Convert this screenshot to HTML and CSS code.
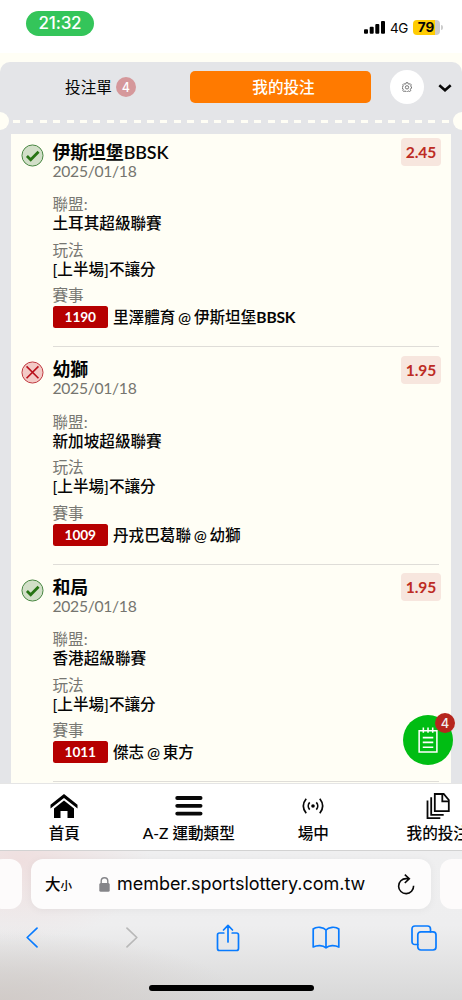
FILE: index.html
```
<!DOCTYPE html>
<html lang="zh-Hant">
<head>
<meta charset="utf-8">
<title>我的投注</title>
<link rel="stylesheet" href="styles.css">
</head>
<body>
<div class="screen">
  <header class="status">
    <span class="clock">21:32</span>
    <div class="signals">
      <svg class="bars" viewBox="0 0 21 13"><rect x="0" y="8.2" width="4" height="4.6" rx="1"/><rect x="5.7" y="5.8" width="4" height="7" rx="1"/><rect x="11.3" y="3" width="4" height="9.8" rx="1"/><rect x="17" y="0" width="4" height="12.8" rx="1"/></svg>
      <span class="network">4G</span>
      <span class="battery">79</span><i class="battery-tip"></i>
    </div>
  </header>

  <main class="slip">
    <div class="tabs">
      <div class="tab"><span>投注單</span><b class="count">4</b></div>
      <div class="tab active">我的投注</div>
      <div class="settings">
        <svg viewBox="0 0 24 24"><path d="M10 1.500h4l.8 3 2 .9L19.600 4l2.600 2.800-1.400 2.800.9 2 1.300.4-.2 3-2 .7-.9 2 1.400 2.600-2.800 2.600-2.700-1.400-2 .9-.8 2.100h-3l-.8-2.100-2-.9-2.700 1.400-2.800-2.600 1.400-2.600-.9-2-2.200-.7v-3l2.200-.7.9-2L1.700 6.800 4.500 4l2.700 1.400 2-.9z"/><circle cx="12" cy="12.800" r="4"/></svg>
      </div>
      <svg class="chevron" viewBox="0 0 14 8"><path d="M1.300 1.300 7 6.200l5.700-4.900"/></svg>
    </div>
    <div class="perforation"><i class="notch"></i><i class="dashes"></i><i class="notch"></i></div>

    <section class="bets">
      <article class="bet">
        <svg class="result won" viewBox="0 0 24 24"><circle cx="12" cy="12" r="11"/><path d="m6.200 12.600 3.900 3.800 8.200-8.400"/></svg>
        <div class="details">
          <div class="title">伊斯坦堡BBSK</div><div class="date">2025/01/18</div>
          <div class="label first">聯盟:</div><div class="value">土耳其超級聯賽</div>
          <div class="label">玩法</div><div class="value">[上半場]不讓分</div>
          <div class="label">賽事</div><div class="match"><span class="code">1190</span><span>里澤體育 @ 伊斯坦堡<b>BBSK</b></span></div>
        </div>
        <span class="odds">2.45</span>
      </article>
      <article class="bet">
        <svg class="result lost" viewBox="0 0 24 24"><circle cx="12" cy="12" r="11"/><path d="m5.800 5.600 12.400 12.400m0-12.400L5.800 18"/></svg>
        <div class="details">
          <div class="title">幼獅</div><div class="date">2025/01/18</div>
          <div class="label first">聯盟:</div><div class="value">新加坡超級聯賽</div>
          <div class="label">玩法</div><div class="value">[上半場]不讓分</div>
          <div class="label">賽事</div><div class="match"><span class="code">1009</span><span>丹戎巴葛聯 @ 幼獅</span></div>
        </div>
        <span class="odds">1.95</span>
      </article>
      <article class="bet">
        <svg class="result won" viewBox="0 0 24 24"><circle cx="12" cy="12" r="11"/><path d="m6.200 12.600 3.900 3.800 8.200-8.400"/></svg>
        <div class="details">
          <div class="title">和局</div><div class="date">2025/01/18</div>
          <div class="label first">聯盟:</div><div class="value">香港超級聯賽</div>
          <div class="label">玩法</div><div class="value">[上半場]不讓分</div>
          <div class="label">賽事</div><div class="match"><span class="code">1011</span><span>傑志 @ 東方</span></div>
        </div>
        <span class="odds">1.95</span>
      </article>
    </section>

    <div class="floating">
      <svg viewBox="0 0 22 28"><path d="M1.200 4.200h18.600v22.300H1.200zM5.600 1v5.500M10.500 1v5.500M15.400 1v5.500M5 11.500h11M5 16.500h11M5 21.500h11"/></svg>
      <b class="floating-count">4</b>
    </div>
  </main>

  <nav class="site-nav">
    <a class="nav-item"><svg viewBox="0 0 28 26"><path d="M14 1 27.500 11.800v3.700L14 4.900.500 15.500v-3.700z"/><path d="M14 7.500 24 15.500V25h-6.500v-7h-7v7H4v-9.500z"/></svg><span>首頁</span></a>
    <a class="nav-item"><svg viewBox="0 0 28 26"><path class="stroke menu" d="M2.200 5h23.400M2.200 12.800h23.400M2.200 20.600h23.400"/></svg><span>A-Z 運動類型</span></a>
    <a class="nav-item"><svg viewBox="0 0 28 26"><circle cx="14" cy="13" r="1.800"/><path class="stroke" d="M10.700 9.400a5.300 5.300 0 0 0 0 7.200M17.300 9.400a5.300 5.300 0 0 1 0 7.200M7.200 5.700q-5.800 7.300 0 14.600M20.800 5.700q5.800 7.300 0 14.600"/></svg><span>場中</span></a>
    <a class="nav-item"><svg viewBox="0 0 28 26"><path class="stroke page" d="M10.800 1h8.900l5.100 6v11.200h-14zM18.300 1v7.300h6.500M7.200 4.200v17.600h12.500M3.500 7.500V25.200h12.800"/></svg><span>我的投注</span></a>
  </nav>

  <footer class="browser">
    <div class="address-row">
      <div class="peek"></div>
      <div class="address">
        <span class="text-size">大<small>小</small></span>
        <svg class="lock" viewBox="0 0 11 15"><rect x="0.300" y="6" width="10.400" height="8.700" rx="1.500"/><path d="M2.200 6.500V4a3.300 3.300 0 0 1 6.600 0v2.500"/></svg>
        <span class="url">member.sportslottery.com.tw</span>
        <svg class="reload" viewBox="0 0 18 21"><path d="M11.700 4.600H9.200A7.500 7.500 0 1 0 16.600 11.800M7.800.600l4.500 4.100-4.500 4.300"/></svg>
      </div>
      <div class="peek"></div>
    </div>
    <div class="toolbar">
      <svg class="back" viewBox="0 0 12 21"><path d="M11 1.200 1.200 10.500 11 19.800"/></svg>
      <svg class="forward" viewBox="0 0 12 21"><path d="m1 1.200 9.800 9.300L1 19.800"/></svg>
      <svg class="share" viewBox="0 0 24 28"><path d="M7.800 9H3.500Q1.500 9 1.500 11v13.500q0 2 2 2h17q2 0 2-2V11q0-2-2-2h-4.300M12 18V1.500M7.500 6 12 1.300 16.500 6"/></svg>
      <svg class="book" viewBox="0 0 28 23"><path d="M14 21.800V4C11.500 1 4.500.2 1.200 3v18c4-2 9.500-2 12.800.8 3.300-2.800 8.800-2.800 12.800-.8V3C23.500.2 16.500 1 14 4"/></svg>
      <svg class="windows" viewBox="0 0 26 26"><path d="M6.800 19.500H4q-3 0-3-3V4q0-3 3-3h12.500q3 0 3 3v2.800"/><rect x="6.800" y="6.800" width="18.200" height="18.200" rx="3"/></svg>
    </div>
    <div class="home-bar"></div>
  </footer>
</div>
</body>
</html>
```
FILE: styles.css
```
* { box-sizing: border-box; }
body { margin: 0; font-family: Lato, "Noto Sans CJK TC", sans-serif; }
svg { display: block; flex: none; }
.screen { width: 462px; height: 1000px; overflow: hidden; display: flex; flex-direction: column; background: #fffef5; color: #050505; }

.status { height: 53px; flex: none; background: #fff; display: flex; justify-content: space-between; padding: 11px 19px 0 26px; font-family: Inter, sans-serif; }
.clock { width: 68px; height: 25px; border-radius: 13px; background: #34c55a; color: #fff; font-size: 17px; font-weight: 500; line-height: 25px; text-align: center; letter-spacing: -.2px; }
.signals { display: flex; align-items: center; height: 33px; }
.bars { width: 21px; height: 13px; }
.network { font-size: 13.500px; letter-spacing: -.4px; margin: 1px 5px 0; width: 18px; }
.battery { width: 27px; height: 15px; border-radius: 4px; background: linear-gradient(90deg, #ffcc02 80%, #ccc 80%); font-size: 13.500px; line-height: 15px; font-weight: 700; text-align: center; padding-right: 1px; }
.battery-tip { width: 2px; height: 5px; margin-left: 1px; border-radius: 0 2px 2px 0; background: #ccc; }

.slip { position: relative; margin-top: 9px; height: 721px; flex: none; background: #e4e5e8; border-radius: 10px 10px 0 0; display: flex; flex-direction: column; }
.tabs { height: 50px; flex: none; display: flex; align-items: center; padding-right: 10px; }
.tab { width: 190px; display: flex; align-items: center; justify-content: center; gap: 4px; font-size: 15.600px; line-height: 20px; padding-left: 11px; }
.tab.active { width: 181px; height: 32px; padding: 0 0 0 6px; border-radius: 5px; background: #ff7a00; color: #fff; font-weight: 500; }
.count { width: 20px; height: 20px; border-radius: 50%; background: #d5989b; color: #fff; font: 500 12.500px/21px Inter, sans-serif; text-align: center; }
.settings { width: 34px; height: 34px; margin-left: 19px; border-radius: 50%; background: #fff; display: grid; place-items: center; }
.settings svg { width: 10px; height: 10px; fill: none; stroke: #555; stroke-width: 1.900; }
.chevron { width: 14px; height: 8px; margin: 2px 0 0 14px; fill: none; stroke: #080808; stroke-width: 2.600; }
.perforation { height: 18px; flex: none; display: flex; align-items: center; justify-content: space-between; margin: 0 -9px; clip-path: inset(0 9px); }
.notch { width: 18px; height: 18px; flex: none; border-radius: 50%; background: #fffef5; }
.dashes { height: 3px; flex: 1; margin-top: 1px; background: repeating-linear-gradient(90deg, transparent 0 4px, #fffef5 4px 11px, transparent 11px 13.400px); }

.bets { margin: 4px 11px 0; height: 649px; background: #fffef5; overflow: hidden; }
.bet { height: 217.500px; display: flex; align-items: flex-start; padding: 0 10px; }
.result { width: 23px; height: 23px; margin-top: 9.500px; fill: none; }
.won circle { fill: #d2dfc8; stroke: #41823b; }
.won path { stroke: #277414; stroke-width: 2.900; }
.lost circle { fill: #f3cac6; stroke: #bd3239; }
.lost path { stroke: #b9111b; stroke-width: 1.700; }
.details { flex: 1; margin: 0 -38px 0 8.500px; padding-top: 7.500px; height: 213px; border-bottom: 1px solid #dfddd8; }
.title { font-size: 17.900px; font-weight: 600; line-height: 21px; letter-spacing: -.1px; }
.date { font-size: 15.700px; line-height: 17px; color: #75756f; letter-spacing: -.3px; }
.label { font-size: 15.600px; line-height: 19px; margin-top: 7.500px; color: #777772; }
.label.first { margin-top: 15.500px; }
.value { font-size: 15.600px; font-weight: 500; line-height: 19px; }
.match { display: flex; align-items: center; gap: 5px; margin-top: 1px; font-size: 15.600px; font-weight: 500; line-height: 22px; white-space: nowrap; word-spacing: -1.200px; }
.match b { letter-spacing: -.2px; }
.code { width: 55.500px; height: 22px; border-radius: 2.500px; background: #b60000; color: #fff; font-size: 13.700px; font-weight: 700; letter-spacing: -.1px; text-align: center; }
.odds { width: 40px; height: 28px; margin-top: 4px; border-radius: 4px; background: #f7e6de; color: #bd2b23; font-size: 15.600px; font-weight: 700; line-height: 29px; text-align: center; letter-spacing: -.1px; }
.floating { position: absolute; left: 403px; top: 653px; width: 50px; height: 50px; border-radius: 50%; background: #00bd13; display: grid; place-items: center; }
.floating svg { width: 21px; height: 28px; fill: none; stroke: #fff; stroke-width: 1.600; }
.floating-count { position: absolute; right: -2px; top: -2.500px; width: 20px; height: 20px; border-radius: 50%; background: #b6261e; color: #eee; font: 500 13px/21px Inter, sans-serif; text-align: center; }

.site-nav { height: 67px; flex: none; border-top: 1px solid #e5e5e5; background: #fff; display: flex; padding: 9px 0 0 2px; }
.nav-item { width: 124.500px; flex: none; display: flex; flex-direction: column; align-items: center; gap: 4px; font-size: 15.600px; line-height: 20px; font-weight: 500; white-space: nowrap; }
.nav-item svg { width: 28px; height: 26px; }
.stroke { fill: none; stroke: #080808; stroke-width: 1.700; }
.menu { stroke-width: 3.800; stroke-linecap: round; }
.page { stroke-width: 1.800; }

.browser { height: 150px; flex: none; border-top: 1px solid #d2d2d2; background: radial-gradient(ellipse 130px 80px at 20px 10px, #efdfdf, transparent), radial-gradient(ellipse 240px 70px at 0 150px, #d1cbc8, transparent), linear-gradient(#efeff0, #eeeeef 50%, #d8d8d8); }
.address-row { display: flex; justify-content: center; gap: 9px; padding-top: 8px; }
.peek { width: 31px; height: 50px; flex: none; border-radius: 12px; background: #fdfbfb; }
.address { width: 400px; height: 50px; flex: none; border-radius: 12px; background: #fdfcfc; box-shadow: 0 1px 9px #0000000d; display: flex; align-items: center; padding: 0 16px 0 14px; }
.text-size { width: 54px; font: 500 15.500px/20px "Noto Sans CJK TC", sans-serif; }
.text-size small { font-size: 11.500px; }
.lock { width: 11px; height: 15px; fill: #858589; }
.lock path { fill: none; stroke: #858589; stroke-width: 1.400; }
.url { width: 250px; margin: 0 auto 0 7px; font: 400 18px/24px Inter, sans-serif; letter-spacing: -.04px; white-space: nowrap; }
.reload { width: 18px; height: 21px; fill: none; stroke: #080808; stroke-width: 1.600; }
.toolbar { height: 60px; display: flex; align-items: center; padding: 0 0 3px 26px; }
.toolbar svg { fill: none; stroke: #087bff; stroke-width: 1.700; stroke-linejoin: round; stroke-linecap: round; }
.back, .forward { width: 12px; height: 21px; }
.toolbar .forward { stroke: #b8b8b8; margin-left: 88px; }
.share { width: 24px; height: 28px; margin-left: 78px; }
.book { width: 28px; height: 23px; margin-left: 71.500px; }
.windows { width: 26px; height: 26px; margin-left: 71.500px; }
.home-bar { width: 165px; height: 6px; border-radius: 3px; background: #000; margin: 16px auto 0; }
```
